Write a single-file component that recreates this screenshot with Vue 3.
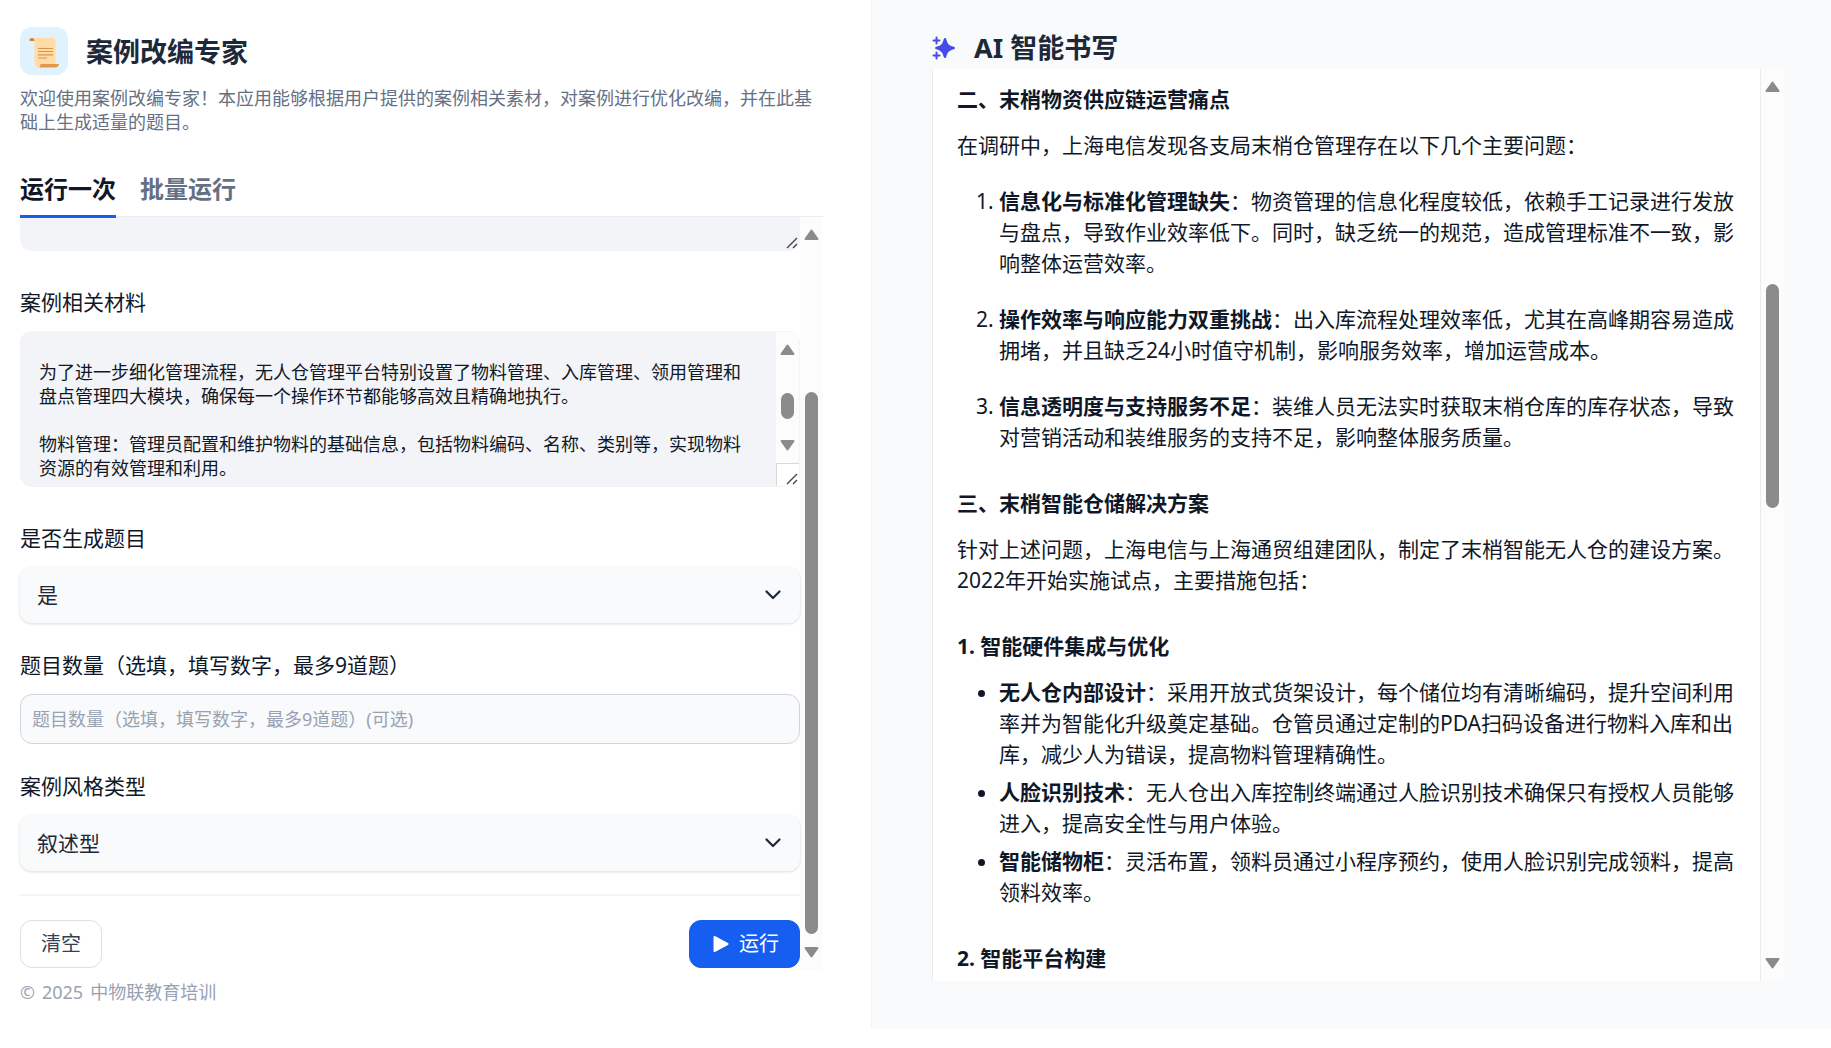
<script setup>
import { ref, h } from 'vue'

const tabs = ['运行一次', '批量运行']
const activeTab = ref(0)

const intro = ref('')
const material = ref(
  '\n为了进一步细化管理流程，无人仓管理平台特别设置了物料管理、入库管理、领用管理和盘点管理四大模块，确保每一个操作环节都能够高效且精确地执行。\n\n物料管理：管理员配置和维护物料的基础信息，包括物料编码、名称、类别等，实现物料资源的有效管理和利用。'
)
const generate = ref('是')
const amount = ref('')
const style = ref('叙述型')

const problems = [
  { title: '信息化与标准化管理缺失', text: '：物资管理的信息化程度较低，依赖手工记录进行发放与盘点，导致作业效率低下。同时，缺乏统一的规范，造成管理标准不一致，影响整体运营效率。' },
  { title: '操作效率与响应能力双重挑战', text: '：出入库流程处理效率低，尤其在高峰期容易造成拥堵，并且缺乏24小时值守机制，影响服务效率，增加运营成本。' },
  { title: '信息透明度与支持服务不足', text: '：装维人员无法实时获取末梢仓库的库存状态，导致对营销活动和装维服务的支持不足，影响整体服务质量。' }
]
const measures = [
  { title: '无人仓内部设计', text: '：采用开放式货架设计，每个储位均有清晰编码，提升空间利用率并为智能化升级奠定基础。仓管员通过定制的PDA扫码设备进行物料入库和出库，减少人为错误，提高物料管理精确性。' },
  { title: '人脸识别技术', text: '：无人仓出入库控制终端通过人脸识别技术确保只有授权人员能够进入，提高安全性与用户体验。' },
  { title: '智能储物柜', text: '：灵活布置，领料员通过小程序预约，使用人脸识别完成领料，提高领料效率。' }
]

// Scroll bar; parts = free track above, thumb, free track below
const arrow = (d) =>
  h('svg', { width: 15, height: 11, viewBox: '0 0 15 11' }, [
    h('path', { d, fill: '#8b8b8b', stroke: '#8b8b8b', 'stroke-width': 2, 'stroke-linejoin': 'round' })
  ])
const ScrollBar = (props) =>
  h('div', { class: 'bar', 'aria-hidden': 'true' }, [
    arrow('M7.5 1.5 L13.5 10 L1.5 10 Z'),
    h('div', { class: 'bar-track', style: { gridTemplateRows: props.parts.map((p) => p + 'fr').join(' ') } }, [
      h('div', { class: 'bar-thumb' })
    ]),
    arrow('M7.5 9.5 L13.5 1 L1.5 1 Z')
  ])
ScrollBar.props = ['parts']
</script>

<template>
  <div class="page">
    <section class="left">
      <header class="brand">
        <svg class="logo" viewBox="0 0 48 48" aria-hidden="true">
          <rect width="48" height="48" rx="12" fill="#e0f2fe" />
          <path d="M14 14H10.5Q9 14 9.3 12.8Q9.8 11 12 11H16V14Z" fill="#c9823f" />
          <path d="M12.5 11H33Q35.500 11 35.500 14V37L30 40.500H19.500Q14.500 40.500 14.500 36V14Q14.500 11.500 12.500 11Z" fill="#ffdca6" />
          <path d="M20.500 37H39Q38.500 40.500 35 40.500H19Q20.500 39.500 20.500 37Z" fill="#e39a48" />
          <path d="M18 21.500H33M18 24.500H33M18 27.800H33M18 31H27" stroke="#d9944c" stroke-width="1.200" fill="none" />
        </svg>
        <h1>案例改编专家</h1>
      </header>
      <p class="desc">欢迎使用案例改编专家！本应用能够根据用户提供的案例相关素材，对案例进行优化改编，并在此基础上生成适量的题目。</p>
      <nav class="tabs">
        <button v-for="(t, i) in tabs" :key="t" type="button" class="tab" :class="{ active: i === activeTab }" @click="activeTab = i">{{ t }}</button>
      </nav>

      <div class="scroller">
        <form class="form" @submit.prevent>
          <div class="area stub">
            <textarea v-model="intro" aria-label="案例简介"></textarea>
            <svg class="grip" viewBox="0 0 12 12" aria-hidden="true"><path d="M1 11L11 1M7 11L11 7" /></svg>
          </div>

          <div class="field wide">
            <label for="material">案例相关材料</label>
            <div class="area">
              <textarea id="material" v-model="material"></textarea>
              <div class="area-side">
                <ScrollBar :parts="[38, 25, 21]" />
                <div class="corner"></div>
              </div>
              <svg class="grip" viewBox="0 0 12 12" aria-hidden="true"><path d="M1 11L11 1M7 11L11 7" /></svg>
            </div>
          </div>

          <div class="field wide">
            <label for="generate">是否生成题目</label>
            <div class="select">
              <select id="generate" v-model="generate">
                <option>是</option>
                <option>否</option>
              </select>
              <svg class="chevron" viewBox="0 0 16 10" aria-hidden="true"><path d="M1.500 1.500L8 8L14.500 1.500" /></svg>
            </div>
          </div>

          <div class="field">
            <label for="amount">题目数量（选填，填写数字，最多9道题）</label>
            <input id="amount" v-model="amount" type="text" placeholder="题目数量（选填，填写数字，最多9道题）(可选)" />
          </div>

          <div class="field">
            <label for="style">案例风格类型</label>
            <div class="select">
              <select id="style" v-model="style">
                <option>叙述型</option>
                <option>分析型</option>
              </select>
              <svg class="chevron" viewBox="0 0 16 10" aria-hidden="true"><path d="M1.500 1.500L8 8L14.500 1.500" /></svg>
            </div>
          </div>

          <div class="actions">
            <button type="button" class="btn">清空</button>
            <button type="submit" class="btn primary">
              <svg width="16" height="18" viewBox="0 0 16 18" aria-hidden="true"><path d="M1.500 2L14.500 9L1.500 16Z" fill="#fff" stroke="#fff" stroke-width="2" stroke-linejoin="round" /></svg>
              <span>运行</span>
            </button>
          </div>
        </form>
        <ScrollBar :parts="[152, 541, 13]" />
      </div>

      <footer class="copy"><span>©</span><span>2025</span><span>中物联教育培训</span></footer>
    </section>

    <section class="right">
      <header class="result-head">
        <svg class="spark" viewBox="0 0 24 24" aria-hidden="true">
          <path d="M13 2Q14 2 14.300 3.200C15.600 7.800 16.500 9.200 21.800 10.800Q23 11.200 23 12Q23 12.800 21.800 13.200C16.500 14.800 15.600 16.200 14.300 20.800Q14 22 13 22Q12 22 11.700 20.800C10.400 16.200 9.500 14.800 4.200 13.200Q3 12.800 3 12Q3 11.200 4.200 10.800C9.500 9.200 10.400 7.800 11.700 3.200Q12 2 13 2Z" fill="#444ce7" />
          <path d="M4.500 1.500V7.500M1.500 4.500H7.500M4.500 16.500V22.500M1.500 19.500H7.500" stroke="#444ce7" stroke-width="2" stroke-linecap="round" />
        </svg>
        <h2>AI 智能书写</h2>
      </header>
      <div class="result">
        <article class="doc">
          <h3>二、末梢物资供应链运营痛点</h3>
          <p>在调研中，上海电信发现各支局末梢仓管理存在以下几个主要问题：</p>
          <ol>
            <li v-for="p in problems" :key="p.title"><strong>{{ p.title }}</strong>{{ p.text }}</li>
          </ol>
          <h3>三、末梢智能仓储解决方案</h3>
          <p>针对上述问题，上海电信与上海通贸组建团队，制定了末梢智能无人仓的建设方案。2022年开始实施试点，主要措施包括：</p>
          <h3>1. 智能硬件集成与优化</h3>
          <ul>
            <li v-for="m in measures" :key="m.title"><strong>{{ m.title }}</strong>{{ m.text }}</li>
          </ul>
          <h3>2. 智能平台构建</h3>
        </article>
        <ScrollBar :parts="[192, 224, 450]" />
      </div>
    </section>
  </div>
</template>

<style>
body {
  background: #fff;
}
.bar {
  display: flex;
  flex: none;
  flex-direction: column;
  align-items: center;
  box-sizing: border-box;
  width: 23px;
  padding: 12px 0;
  background: #fcfcfc;
}
.bar svg {
  flex: none;
}
.bar-track {
  display: grid;
  flex: 1;
  width: 13px;
}
.bar-thumb {
  grid-row: 2;
  border-radius: 7px;
  background: #8b8b8b;
}
</style>

<style scoped>
.page,
.page * {
  box-sizing: border-box;
}
.page {
  display: grid;
  grid-template-columns: 871fr 960fr;
  height: calc(100vh - 19px);
  font-family: "Noto Sans", "Noto Sans CJK SC", sans-serif;
  font-size: 21px;
  font-weight: 390;
  line-height: 32px;
  color: #101828;
  text-spacing-trim: space-all;
}
h1, h2, h3, p, ol, ul {
  margin: 0;
}
strong {
  font-weight: 700;
}
button, input, select, textarea {
  margin: 0;
  border: 0;
  font: inherit;
  color: inherit;
  outline: none;
}

.left {
  display: flex;
  flex-direction: column;
  min-width: 0;
  min-height: 0;
  padding: 27px 48px 25px 20px;
}
.brand {
  display: flex;
  align-items: center;
  gap: 18px;
}
.logo {
  width: 48px;
  height: 48px;
}
h1, h2 {
  font-size: 27px;
  line-height: 40px;
  font-weight: 700;
  color: #1d2939;
}
h1 {
  padding-top: 2px;
}
.desc {
  margin-top: 11px;
  font-size: 18px;
  line-height: 24px;
  color: #667085;
}
.tabs {
  display: flex;
  gap: 24px;
  margin-top: 37px;
  border-bottom: 1px solid #eaecf0;
}
.tab {
  position: relative;
  z-index: 1;
  margin-bottom: -2px;
  padding: 0 0 8px;
  border-bottom: 3px solid transparent;
  background: none;
  font-size: 24px;
  line-height: 36px;
  font-weight: 700;
  color: #667085;
}
.tab.active {
  border-color: #155eef;
  color: #101828;
}

.scroller {
  display: flex;
  flex: 1;
  min-height: 0;
}
.form {
  flex: 1;
  min-width: 0;
}
.area {
  position: relative;
  display: flex;
  height: 156px;
  border-radius: 12px;
  background: #f2f4f7;
  overflow: hidden;
}
.stub {
  height: 34px;
  border-radius: 0 0 12px 12px;
}
.area textarea {
  flex: 1;
  min-width: 0;
  padding: 5px 19px 0;
  background: none;
  font-size: 18px;
  line-height: 24px;
  resize: none;
  overflow: hidden;
}
.area-side {
  display: flex;
  flex-direction: column;
  margin: 1px 1px 1px 0;
}
.area-side .bar {
  flex: 1;
}
.corner {
  height: 23px;
  border: solid #d9d9d9;
  border-width: 1px 0 0 1px;
  background: #fff;
}
.grip {
  position: absolute;
  right: 2px;
  bottom: 2px;
  width: 12px;
  height: 12px;
  fill: none;
  stroke: #444;
  stroke-width: 1.4;
}
.field {
  margin-top: 28px;
}
.field.wide {
  margin-top: 37px;
}
.field label {
  display: block;
  margin-bottom: 15px;
  line-height: 28px;
}
.select {
  position: relative;
}
select {
  display: block;
  width: 100%;
  height: 56px;
  padding: 0 17px;
  border-radius: 12px;
  background: #f9fafb;
  color: #1d2939;
  appearance: none;
  box-shadow: 0 1px 3px rgba(16, 24, 40, 0.16);
}
.chevron {
  position: absolute;
  right: 19px;
  top: 23px;
  width: 16px;
  height: 10px;
  fill: none;
  stroke: #1d2939;
  stroke-width: 2.2;
  stroke-linecap: round;
  stroke-linejoin: round;
  pointer-events: none;
}
input {
  display: block;
  width: 100%;
  height: 50px;
  padding: 0 11px;
  border: 1px solid #d0d5dd;
  border-radius: 12px;
  background: #f9fafb;
  font-size: 18px;
}
input::placeholder {
  color: #98a2b3;
  opacity: 1;
}
.actions {
  display: flex;
  justify-content: space-between;
  margin-top: 23px;
  padding-top: 24px;
  border-top: 2px solid #f2f4f7;
}
.btn {
  display: flex;
  align-items: center;
  gap: 10px;
  height: 48px;
  padding: 0 20px;
  border: 1px solid #dcdfe4;
  border-radius: 12px;
  background: #fff;
  font-size: 20px;
  color: #344054;
}
.btn.primary {
  padding: 0 20px 0 23px;
  border-color: #155eef;
  background: #155eef;
  color: #fff;
}
.copy {
  display: flex;
  gap: 7px;
  margin-top: 10px;
  font-size: 18px;
  line-height: 24px;
  color: #98a2b3;
}

.right {
  display: flex;
  flex-direction: column;
  min-width: 0;
  min-height: 0;
  padding: 28px 47px 48px 60px;
  border-left: 1px solid #f2f4f7;
  background: #f9fafc;
}
.result-head {
  display: flex;
  align-items: center;
  gap: 18px;
}
.spark {
  width: 24px;
  height: 24px;
  fill: none;
}
.result {
  display: flex;
  flex: 1;
  min-height: 0;
  margin-top: 1px;
}
.doc {
  flex: 1;
  min-width: 0;
  padding: 15px 24px 0;
  border: solid #eaecf0;
  border-width: 0 1px;
  background: #fff;
  line-height: 31px;
  overflow: hidden;
}
.doc h3 {
  margin: 35px 0 15px;
  font-size: 21px;
  line-height: 31px;
  font-weight: 700;
}
.doc h3:first-child {
  margin-top: 0;
}
.doc ol,
.doc ul {
  padding-left: 42px;
}
.doc ol {
  margin-top: 25px;
}
.doc ol li + li {
  margin-top: 25px;
}
.doc ul li + li {
  margin-top: 7px;
}
</style>
